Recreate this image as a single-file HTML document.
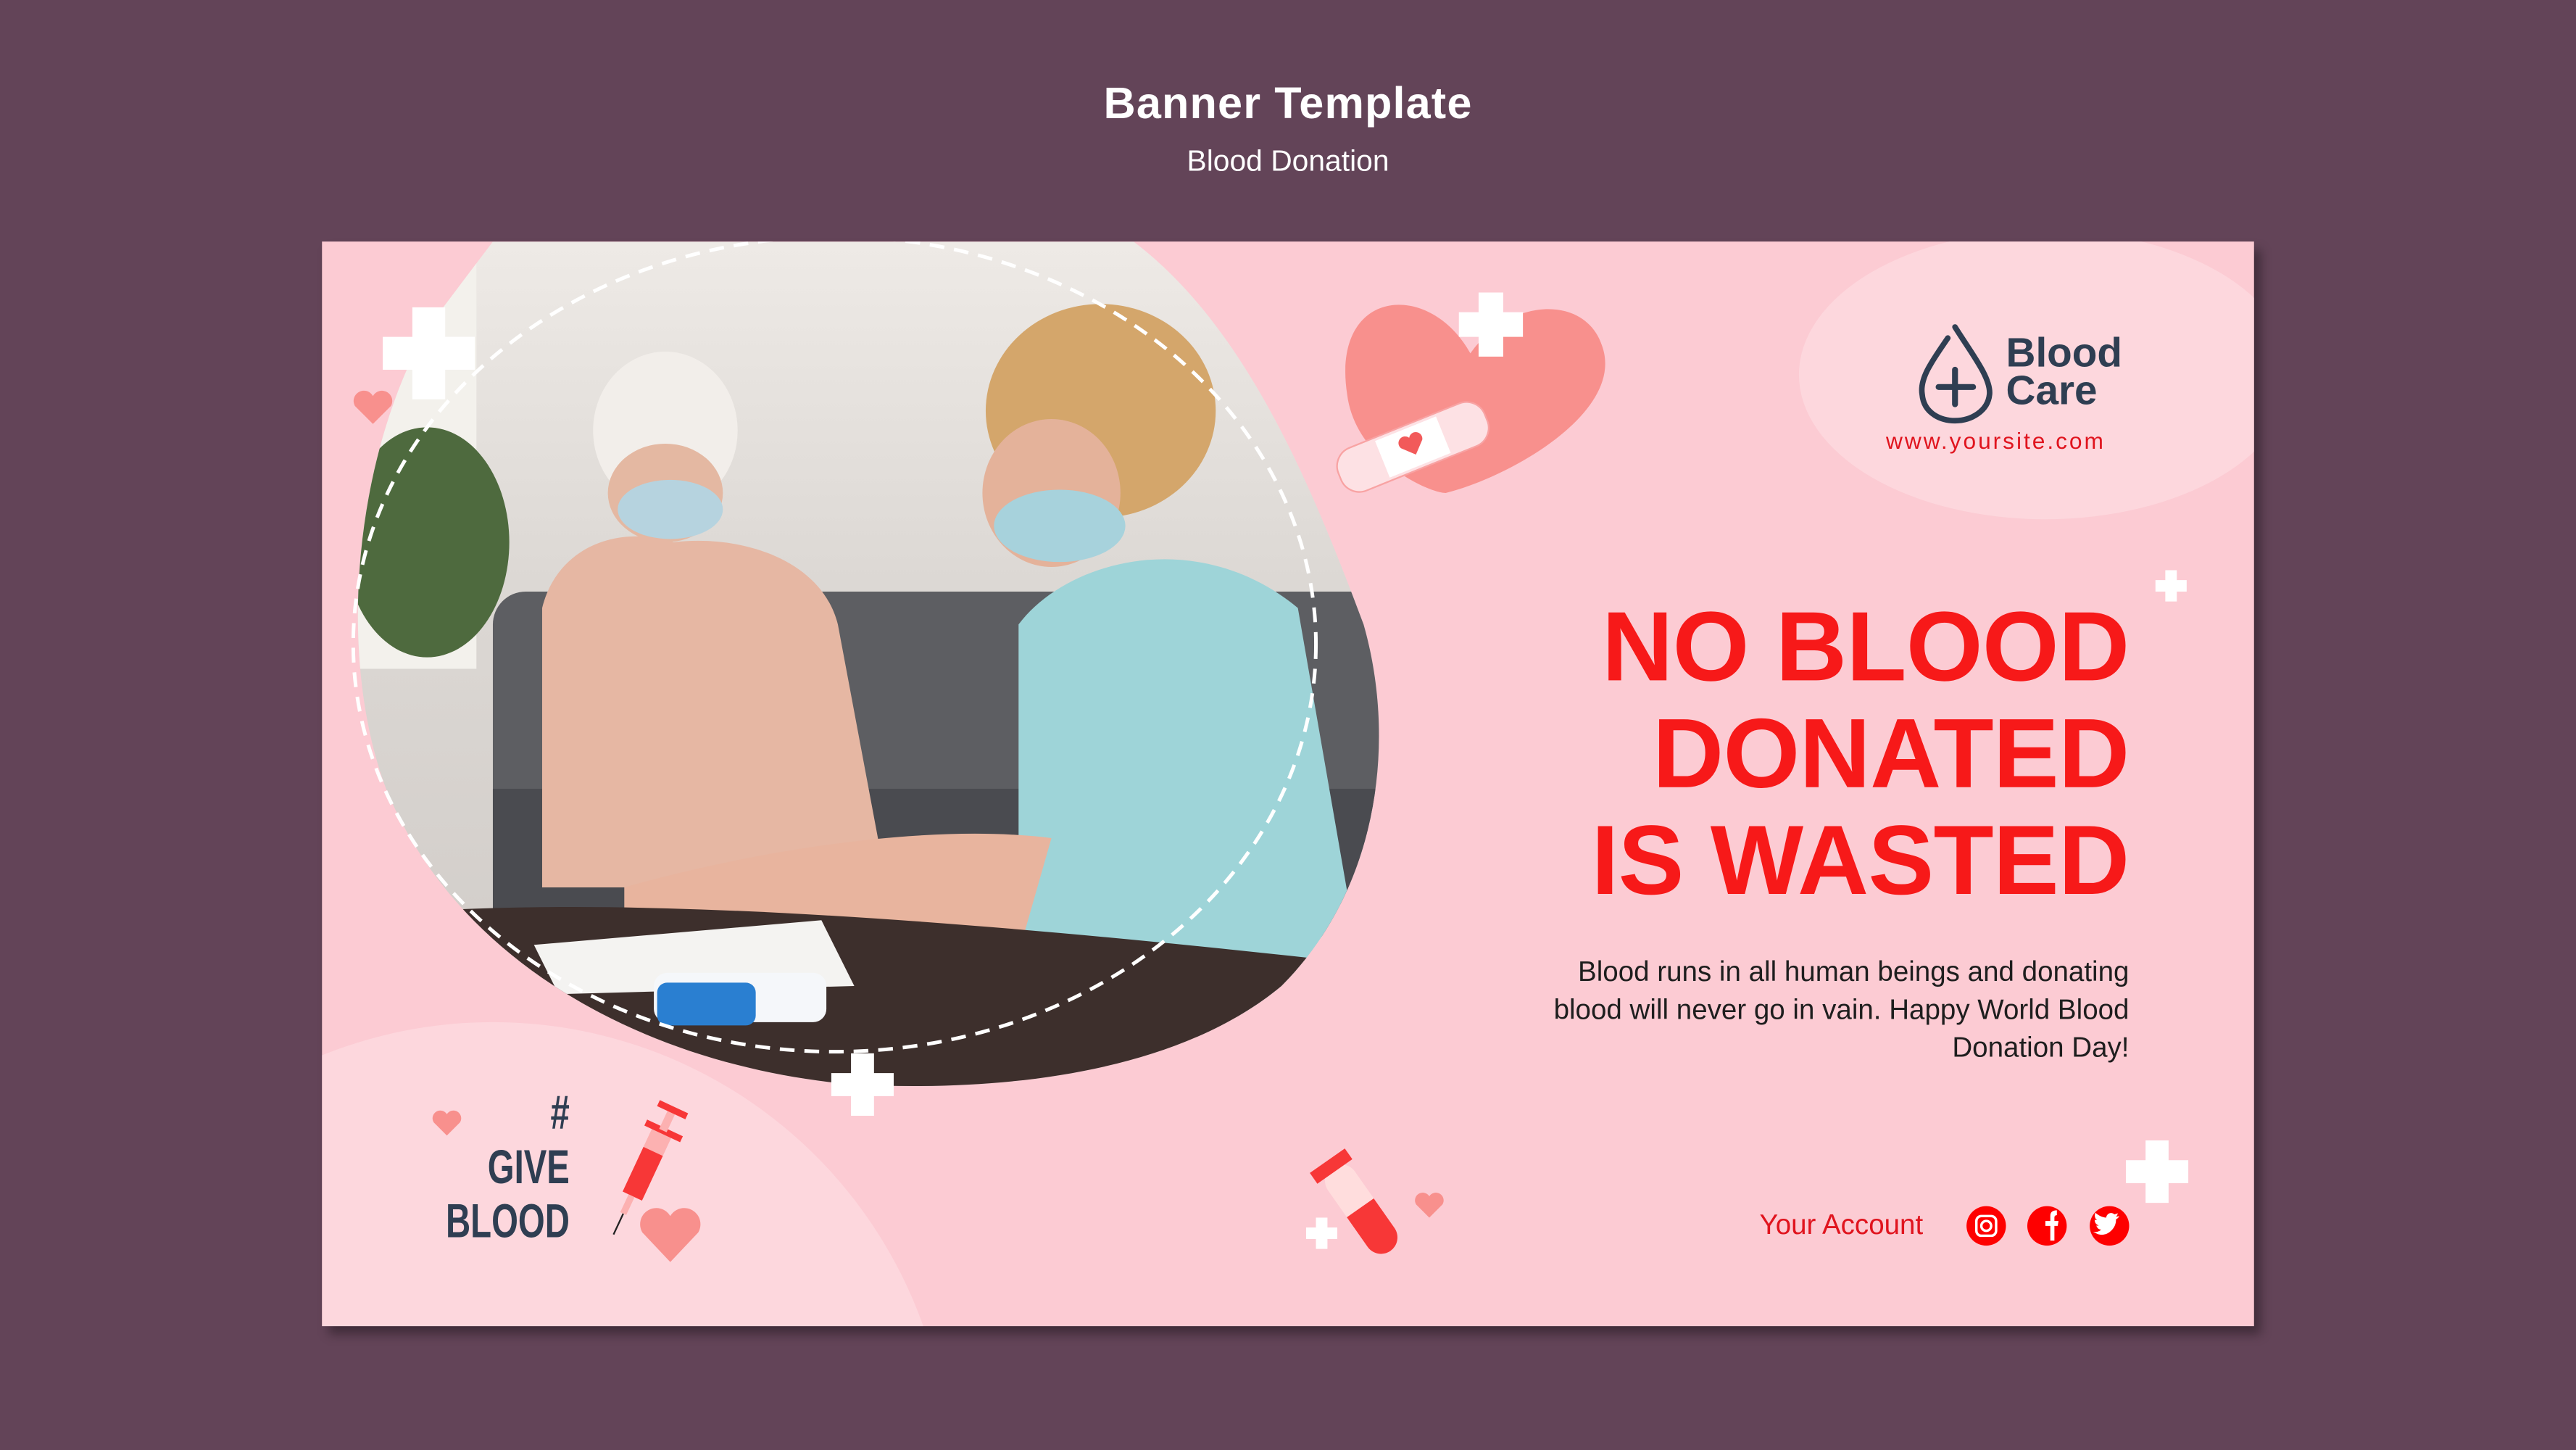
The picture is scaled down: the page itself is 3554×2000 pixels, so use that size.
<!DOCTYPE html>
<html><head><meta charset="utf-8"><style>
html,body{margin:0;padding:0;width:3554px;height:2000px;overflow:hidden;background:#634458;}
#s{position:absolute;left:0;top:0;width:1568px;height:882px;overflow:hidden;transform:scale(2.2666,2.2666);transform-origin:0 0;font-family:"Liberation Sans",sans-serif;}
.a{position:absolute;}
</style></head><body><div id="s">
<div class="a" style="left:0;width:1568px;top:48px;text-align:center;color:#fff;font-weight:bold;font-size:27px;letter-spacing:0.5px">Banner Template</div>
<div class="a" style="left:0;width:1568px;top:88px;text-align:center;color:#fff;font-size:18px">Blood Donation</div>
<div class="a" style="left:196px;top:147px;width:1176px;height:660px;background:#fccbd3;overflow:hidden;box-shadow:4px 5px 6px rgba(0,0,0,0.35)">
<svg width="1176" height="660" viewBox="196 147 1176 660" style="position:absolute;left:0;top:0">
<defs>
<clipPath id="cp"><path d="M300 147 L690 147 C760 200 800 300 830 380 C850 450 840 540 780 600 C720 650 620 665 520 660 C400 650 280 590 235 480 C205 400 215 280 260 200 Z"/></clipPath>
<linearGradient id="bg" x1="0" y1="0" x2="0" y2="1"><stop offset="0" stop-color="#eeeae6"/><stop offset="0.4" stop-color="#dcd8d4"/><stop offset="1" stop-color="#cfcac6"/></linearGradient>
</defs>
<ellipse cx="1245" cy="228" rx="150" ry="88" fill="#fdd7dd"/>
<circle cx="300" cy="900" r="278" fill="#fdd7dd"/>
<g clip-path="url(#cp)">
<rect x="200" y="147" width="660" height="520" fill="url(#bg)"/>
<rect x="200" y="147" width="90" height="260" fill="#f3f1ec"/>
<ellipse cx="260" cy="330" rx="50" ry="70" fill="#4e6a3e"/>
<rect x="300" y="360" width="560" height="190" rx="20" fill="#5d5e62"/>
<rect x="300" y="480" width="560" height="90" fill="#4a4b50"/>
<ellipse cx="405" cy="262" rx="44" ry="48" fill="#f2eeea"/>
<ellipse cx="405" cy="300" rx="35" ry="30" fill="#e4b8a2"/>
<ellipse cx="408" cy="310" rx="32" ry="18" fill="#b6d3df"/>
<path d="M330 370 C340 330 380 320 410 330 C450 325 500 340 510 380 L540 540 L330 540 Z" fill="#e6b7a3"/>
<ellipse cx="670" cy="250" rx="70" ry="65" fill="#d4a66b"/>
<ellipse cx="640" cy="300" rx="42" ry="45" fill="#e4b29a"/>
<ellipse cx="645" cy="320" rx="40" ry="22" fill="#a7d2dc"/>
<path d="M620 380 C650 340 730 320 790 370 L830 600 L660 640 L620 560 Z" fill="#9ed4d8"/>
<path d="M380 540 C450 520 560 500 640 510 L620 580 L380 580 Z" fill="#e8b49e"/>
<path d="M200 560 C350 540 600 560 860 590 L860 680 L200 680 Z" fill="#3d2f2c"/>
<path d="M325 575 L500 560 L520 600 L340 605 Z" fill="#f4f3f1"/>
<rect x="398" y="592" width="105" height="30" rx="8" fill="#f5f7fa"/>
<rect x="400" y="598" width="60" height="26" rx="6" fill="#2a7fd1"/>
</g>
<ellipse cx="508" cy="392" rx="293" ry="248" fill="none" stroke="#fff" stroke-width="2.2" stroke-dasharray="9 6"/>
<path d="M895 215 C870 170 810 175 820 240 C825 280 870 300 880 300 C920 290 990 250 975 210 C965 180 920 180 895 215Z" fill="#f8908d"/>
<g transform="rotate(-22 860 272)"><rect x="812" y="258" width="96" height="28" rx="12" fill="#fde1e4" stroke="#f8a3a3"/><rect x="840" y="260" width="40" height="24" fill="#fff"/><path d="M860 277 l-7 -7 a4 4 0 0 1 7 -4 a4 4 0 0 1 7 4z" fill="#f25a5a"/></g>
<g fill="#fff">
<path d="M900 178h15v12h12v15h-12v12h-15v-12h-12v-15h12z"/>
<path d="M251 187h20v18h18v20h-18v18h-20v-18h-18v-20h18z"/>
<path d="M518 641h14v12h12v14h-12v12h-14v-12h-12v-14h12z"/>
<path d="M1318 347h7v6h6v7h-6v6h-7v-6h-6v-7h6z"/>
<path d="M1306 694h14v12h12v14h-12v12h-14v-12h-12v-14h12z"/>
<path d="M801 741h7v6h6v7h-6v6h-7v-6h-6v-7h6z"/>
</g>
<path d="M227 258 l-11 -11 a6 6 0 0 1 11 -6 a6 6 0 0 1 11 6z" fill="#f8908d"/>
<path d="M272 691 l-8 -8 a4.5 4.5 0 0 1 8 -5 a4.5 4.5 0 0 1 8 5z" fill="#f8908d"/>
<path d="M408 768 l-17 -18 a9 9 0 0 1 17 -10 a9 9 0 0 1 17 10z" fill="#f8908d"/>
<path d="M870 741 l-8 -8 a4.5 4.5 0 0 1 8 -5 a4.5 4.5 0 0 1 8 5z" fill="#f8908d"/>
<g transform="rotate(25 395 705)"><rect x="389" y="686" width="13" height="44" rx="2" fill="#fcb1b1"/><rect x="389" y="700" width="13" height="30" fill="#f73737"/><rect x="384" y="684" width="24" height="4" fill="#f73737"/><rect x="393" y="672" width="5" height="14" fill="#fcb1b1"/><rect x="386" y="670" width="19" height="4" fill="#f73737"/><rect x="393" y="730" width="4" height="12" fill="#fcb1b1"/><line x1="395" y1="742" x2="395" y2="756" stroke="#222" stroke-width="1"/></g>
<g transform="rotate(-35 828 735)"><rect x="818" y="705" width="20" height="62" rx="10" fill="#fdd" /><path d="M818 735 h20 v22 a10 10 0 0 1 -20 0z" fill="#f73737"/><rect x="815" y="700" width="26" height="8" fill="#f73737"/></g>
<path d="M1190 199 C1180 215 1168 228 1170 240 C1171 252 1182 256 1190 256 C1200 256 1210 250 1211 240 C1212 230 1200 215 1190 199Z" fill="none" stroke="#2f3e52" stroke-width="3.4" stroke-linecap="round" stroke-dasharray="150 14" stroke-dashoffset="-8"/>
<path d="M1190 225v21M1180 235.5h21" stroke="#2f3e52" stroke-width="3.6" stroke-linecap="round"/>
<g fill="#fe0000"><circle cx="1209" cy="746" r="12"/><circle cx="1246" cy="746" r="12"/><circle cx="1284" cy="746" r="12"/></g>
<rect x="1203" y="740" width="12" height="12" rx="3" fill="none" stroke="#fff" stroke-width="1.5"/><circle cx="1209" cy="746" r="3" fill="none" stroke="#fff" stroke-width="1.5"/>
<path d="M1248 755v-9h-3v-3h3v-3c0-2.5 1.5-3.5 4-3.5v3c-1 0-1.5.5-1.5 1.5v2h2.5l-.5 3h-2v9z" fill="#fff"/>
<path d="M1277 751c3 1 6 0 8-2 2-2 3-4 3-7 1-.5 1.5-1 2-2-1 .3-1.5.4-2 .3.5-.5 1-1 1-2-1 .5-1.5.6-2 .7-1.5-1.5-4.5-1-5 2-2.5-.2-5-1.5-6.5-3-1 2 0 4 1 4.5-.5 0-1 0-1.500-.3 0 2 1 3 2.5 3.5-.5.2-1 .2-1.5.1.5 1.5 1.5 2.5 3 2.5-1.5 1.2-3 1.6-5 1.4z" fill="#fff"/>
</svg>
<div class="a" style="left:1025px;top:57px;color:#2f3e52;font-weight:bold;font-size:25px;line-height:23px">Blood<br>Care</div>
<div class="a" style="left:952px;top:113px;color:#e0141e;font-size:14px;letter-spacing:1.3px">www.yoursite.com</div>
<div class="a" style="right:76px;top:214px;text-align:right;color:#f71919;font-weight:bold;font-size:60px;line-height:65px;letter-spacing:-0.3px">NO BLOOD<br>DONATED<br>IS WASTED</div>
<div class="a" style="right:76px;top:433px;width:372px;text-align:right;color:#1e1e1e;font-size:17px;line-height:23px">Blood runs in all human beings and donating blood will never go in vain. Happy World Blood Donation Day!</div>
<div class="a" style="left:875px;top:589px;color:#e0141e;font-size:17px">Your Account</div>
<div class="a" style="right:1025px;top:515px;text-align:right;color:#2f3e52;font-weight:bold;font-size:29px;line-height:33px;transform:scaleX(0.72);transform-origin:right">#<br>GIVE<br>BLOOD</div>
</div>
</div></body></html>
